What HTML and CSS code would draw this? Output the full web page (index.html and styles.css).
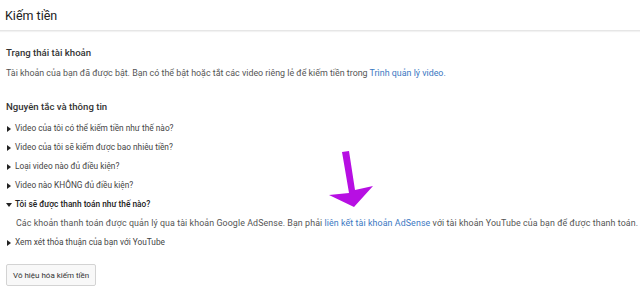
FILE: index.html
```html
<!DOCTYPE html>
<html lang="vi">

<head>
    <meta charset="utf-8">
    <link rel="stylesheet" href="styles.css">
    <title>Kiếm tiền</title>
</head>

<body>
    <div class="tieude">Kiếm tiền</div>

    <div class="noidung">
        <h2 class="muc">Trạng thái tài khoản</h2>
        <p class="mota">Tài khoản của bạn đã được bật. Bạn có thể bật hoặc tắt các video riêng lẻ để kiếm tiền trong <a href="#">Trình quản lý video.</a></p>

        <h2 class="muc muc-hai">Nguyên tắc và thông tin</h2>
        <ul class="danhsach">
            <li class="cauhoi">Video của tôi có thể kiếm tiền như thế nào?</li>
            <li class="cauhoi">Video của tôi sẽ kiếm được bao nhiêu tiền?</li>
            <li class="cauhoi">Loại video nào đủ điều kiện?</li>
            <li class="cauhoi">Video nào KHÔNG đủ điều kiện?</li>
            <li class="cauhoi mo">Tôi sẽ được thanh toán như thế nào?</li>
            <li class="traloi">Các khoản thanh toán được quản lý qua tài khoản Google AdSense. Bạn phải <a href="#">liên kết tài khoản AdSense</a> với tài khoản YouTube của bạn để được thanh toán.</li>
            <li class="cauhoi">Xem xét thỏa thuận của bạn với YouTube</li>
        </ul>

        <button class="nut">Vô hiệu hóa kiếm tiền</button>
    </div>

    <svg class="muiten" width="50" height="60" viewBox="325 148 50 60">
        <polygon points="342,152 349,151 355,190 373,186 354,207 329,195 349,193" fill="#b70fe3" />
    </svg>
</body>

</html>
```

FILE: styles.css
```css
* {
    box-sizing: border-box;
    margin: 0;
    padding: 0;
}

body {
    font-family: Roboto, "Liberation Sans", sans-serif;
    background: #fff;
    color: #333;
    width: 640px;
    height: 286px;
    overflow: hidden;
    position: relative;
}

a {
    color: #3b78c2;
    text-decoration: none;
}

.tieude {
    height: 31px;
    padding: 0 5px;
    display: flex;
    align-items: center;
    font-size: 12.5px;
    color: #222;
    border-bottom: 1px solid #e6e6e6;
    box-shadow: 0 1px 1px #f2f2f2;
}

.noidung {
    padding: 14px 6px 0;
}

.muc {
    font-size: 9.6px;
    font-weight: 500;
    line-height: 16px;
    color: #333;
}

.muc-hai {
    margin-top: 18px;
}

.mota {
    margin-top: 4px;
    font-size: 8.9px;
    line-height: 16px;
    color: #555;
}

.danhsach {
    list-style: none;
    margin-top: 4px;
}

.danhsach li {
    line-height: 19px;
    font-size: 8.3px;
    color: #444;
    white-space: nowrap;
}

.cauhoi {
    position: relative;
    padding-left: 9px;
}

.cauhoi::before {
    content: "";
    position: absolute;
    left: 1px;
    top: 6.5px;
    border-left: 4px solid #222;
    border-top: 3px solid transparent;
    border-bottom: 3px solid transparent;
}

.cauhoi.mo {
    font-weight: 500;
    color: #222;
}

.cauhoi.mo::before {
    left: 0;
    top: 8px;
    border-top: 4px solid #222;
    border-left: 3px solid transparent;
    border-right: 3px solid transparent;
    border-bottom: none;
}

.traloi {
    padding-left: 10px;
    font-size: 8.85px !important;
    letter-spacing: 0.09px;
    color: #555 !important;
}

.nut {
    margin-top: 12px;
    height: 22px;
    padding: 0 6px;
    font-family: inherit;
    font-size: 8px;
    color: #333;
    background: #f8f8f8;
    border: 1px solid #d3d3d3;
    border-radius: 2px;
}

.muiten {
    position: absolute;
    left: 325px;
    top: 148px;
}
```
